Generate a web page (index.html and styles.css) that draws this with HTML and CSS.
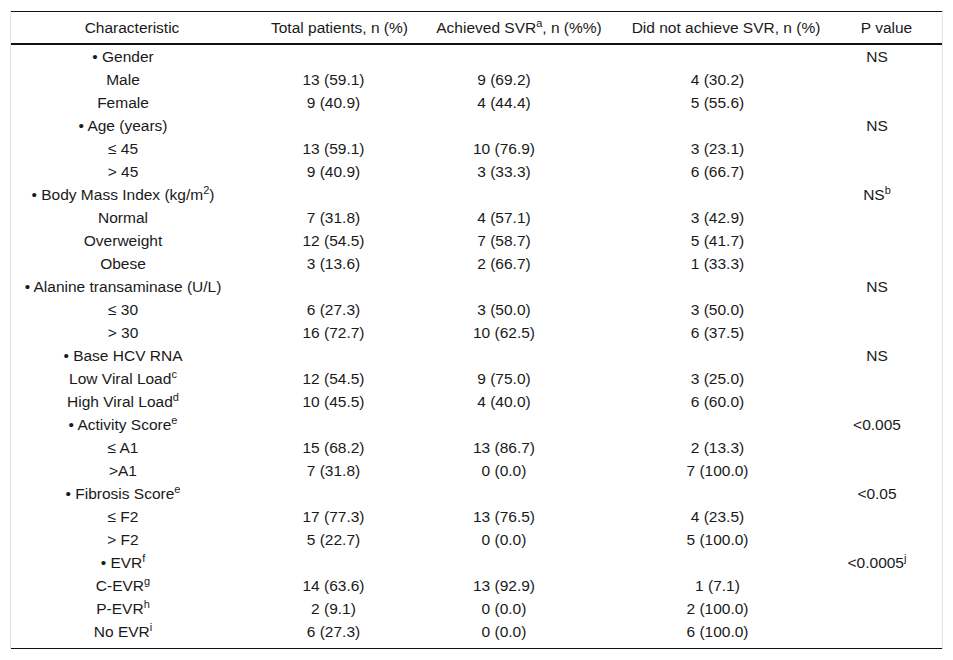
FILE: index.html
```html
<!DOCTYPE html>
<html>
<head>
<meta charset="utf-8">
<link rel="stylesheet" href="styles.css">
</head>
<body>
<div class="wrap">
<table class="tbl">
<colgroup>
<col class="w1"><col class="w2"><col class="w3"><col class="w4"><col class="w5">
</colgroup>
<thead>
<tr>
<th class="c1">Characteristic</th>
<th class="c2">Total patients, n (%)</th>
<th class="c3">Achieved SVR<sup>a</sup>, n (%%)</th>
<th class="c4">Did not achieve SVR, n (%)</th>
<th class="c5">P value</th>
</tr>
</thead>
<tbody>
<tr><td class="c1">• Gender</td><td class="c2"></td><td class="c3"></td><td class="c4"></td><td class="c5">NS</td></tr>
<tr><td class="c1">Male</td><td class="c2">13 (59.1)</td><td class="c3">9 (69.2)</td><td class="c4">4 (30.2)</td><td class="c5"></td></tr>
<tr><td class="c1">Female</td><td class="c2">9 (40.9)</td><td class="c3">4 (44.4)</td><td class="c4">5 (55.6)</td><td class="c5"></td></tr>
<tr><td class="c1">• Age (years)</td><td class="c2"></td><td class="c3"></td><td class="c4"></td><td class="c5">NS</td></tr>
<tr><td class="c1">≤ 45</td><td class="c2">13 (59.1)</td><td class="c3">10 (76.9)</td><td class="c4">3 (23.1)</td><td class="c5"></td></tr>
<tr><td class="c1">&gt; 45</td><td class="c2">9 (40.9)</td><td class="c3">3 (33.3)</td><td class="c4">6 (66.7)</td><td class="c5"></td></tr>
<tr><td class="c1">• Body Mass Index (kg/m<sup>2</sup>)</td><td class="c2"></td><td class="c3"></td><td class="c4"></td><td class="c5">NS<sup>b</sup></td></tr>
<tr><td class="c1">Normal</td><td class="c2">7 (31.8)</td><td class="c3">4 (57.1)</td><td class="c4">3 (42.9)</td><td class="c5"></td></tr>
<tr><td class="c1">Overweight</td><td class="c2">12 (54.5)</td><td class="c3">7 (58.7)</td><td class="c4">5 (41.7)</td><td class="c5"></td></tr>
<tr><td class="c1">Obese</td><td class="c2">3 (13.6)</td><td class="c3">2 (66.7)</td><td class="c4">1 (33.3)</td><td class="c5"></td></tr>
<tr><td class="c1">• Alanine transaminase (U/L)</td><td class="c2"></td><td class="c3"></td><td class="c4"></td><td class="c5">NS</td></tr>
<tr><td class="c1">≤ 30</td><td class="c2">6 (27.3)</td><td class="c3">3 (50.0)</td><td class="c4">3 (50.0)</td><td class="c5"></td></tr>
<tr><td class="c1">&gt; 30</td><td class="c2">16 (72.7)</td><td class="c3">10 (62.5)</td><td class="c4">6 (37.5)</td><td class="c5"></td></tr>
<tr><td class="c1">• Base HCV RNA</td><td class="c2"></td><td class="c3"></td><td class="c4"></td><td class="c5">NS</td></tr>
<tr><td class="c1">Low Viral Load<sup>c</sup></td><td class="c2">12 (54.5)</td><td class="c3">9 (75.0)</td><td class="c4">3 (25.0)</td><td class="c5"></td></tr>
<tr><td class="c1">High Viral Load<sup>d</sup></td><td class="c2">10 (45.5)</td><td class="c3">4 (40.0)</td><td class="c4">6 (60.0)</td><td class="c5"></td></tr>
<tr><td class="c1">• Activity Score<sup>e</sup></td><td class="c2"></td><td class="c3"></td><td class="c4"></td><td class="c5">&lt;0.005</td></tr>
<tr><td class="c1">≤ A1</td><td class="c2">15 (68.2)</td><td class="c3">13 (86.7)</td><td class="c4">2 (13.3)</td><td class="c5"></td></tr>
<tr><td class="c1">&gt;A1</td><td class="c2">7 (31.8)</td><td class="c3">0 (0.0)</td><td class="c4">7 (100.0)</td><td class="c5"></td></tr>
<tr><td class="c1">• Fibrosis Score<sup>e</sup></td><td class="c2"></td><td class="c3"></td><td class="c4"></td><td class="c5">&lt;0.05</td></tr>
<tr><td class="c1">≤ F2</td><td class="c2">17 (77.3)</td><td class="c3">13 (76.5)</td><td class="c4">4 (23.5)</td><td class="c5"></td></tr>
<tr><td class="c1">&gt; F2</td><td class="c2">5 (22.7)</td><td class="c3">0 (0.0)</td><td class="c4">5 (100.0)</td><td class="c5"></td></tr>
<tr><td class="c1">• EVR<sup>f</sup></td><td class="c2"></td><td class="c3"></td><td class="c4"></td><td class="c5">&lt;0.0005<sup>j</sup></td></tr>
<tr><td class="c1">C-EVR<sup>g</sup></td><td class="c2">14 (63.6)</td><td class="c3">13 (92.9)</td><td class="c4">1 (7.1)</td><td class="c5"></td></tr>
<tr><td class="c1">P-EVR<sup>h</sup></td><td class="c2">2 (9.1)</td><td class="c3">0 (0.0)</td><td class="c4">2 (100.0)</td><td class="c5"></td></tr>
<tr class="last"><td class="c1">No EVR<sup>i</sup></td><td class="c2">6 (27.3)</td><td class="c3">0 (0.0)</td><td class="c4">6 (100.0)</td><td class="c5"></td></tr>
</tbody>
</table>
</div>
</body>
</html>
```

FILE: styles.css
```css
html, body {
  margin: 0;
  padding: 0;
  background: #ffffff;
}

body {
  font-family: "Liberation Sans", Arial, sans-serif;
  font-size: 15.5px;
  color: #1a1a1a;
}

.wrap {
  margin: 10px 0 0 10px;
  width: 931px;
  padding-top: 1px;
  border-left: 1px solid #e4e4e4;
  border-right: 1px solid #e4e4e4;
}

.tbl {
  width: 931px;
  table-layout: fixed;
  border-collapse: separate;
  border-spacing: 0;
  border-top: 1px solid #111;
  border-bottom: 1px solid #111;
}

.w1 { width: 242px; }
.w2 { width: 173px; }
.w3 { width: 186px; }
.w4 { width: 228px; }
.w5 { width: 102px; }

.tbl th {
  font-weight: normal;
  text-align: center;
  vertical-align: top;
  padding: 0;
  height: 31px;
  line-height: 31px;
  white-space: nowrap;
  border-bottom: 2px solid #111;
}

.tbl th.c5 { padding-right: 9px; }

.tbl td {
  text-align: center;
  vertical-align: top;
  padding: 0;
  height: 23px;
  line-height: 23px;
  white-space: nowrap;
}

.tbl td.c1 { padding-right: 18px; }
.tbl td.c2 { padding-right: 12px; }
.tbl td.c3 { padding-right: 30px; }
.tbl td.c4 { padding-right: 17px; }
.tbl td.c5 { padding-right: 28px; }

.tbl tr.last td {
  padding-bottom: 5px;
}

sup {
  font-size: 11px;
  line-height: 0;
  vertical-align: 0;
  position: relative;
  top: -6px;
}
```
